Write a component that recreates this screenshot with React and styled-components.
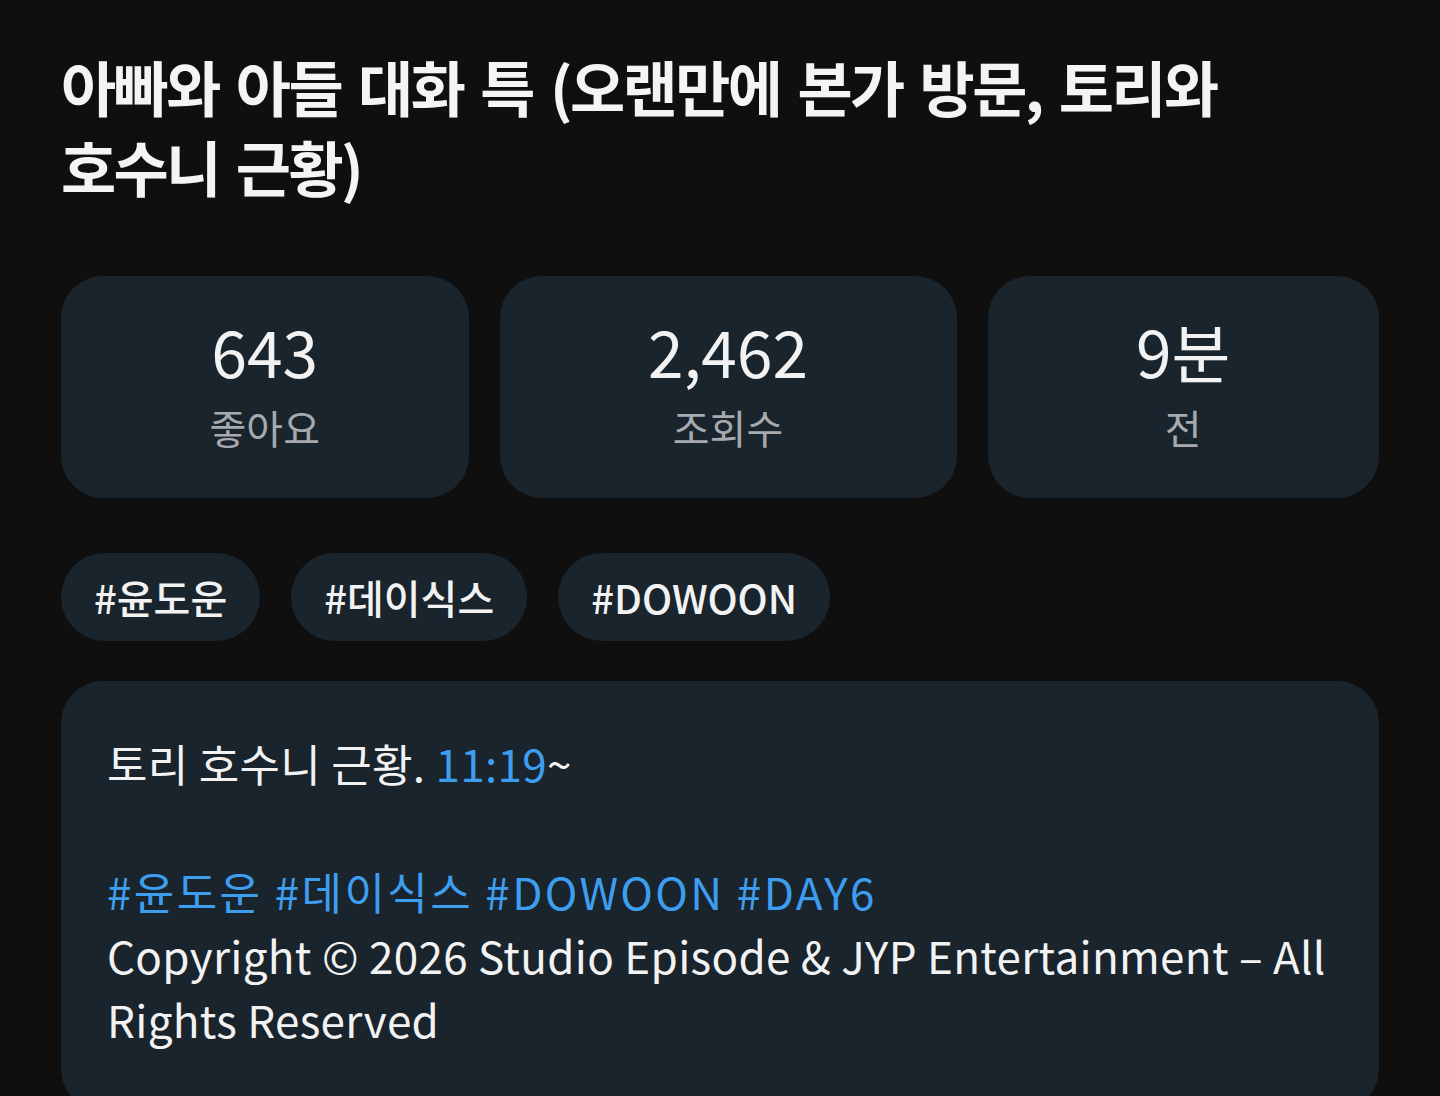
import styled, { createGlobalStyle } from "styled-components";

const GlobalStyle = createGlobalStyle`
  html, body {
    margin: 0;
    padding: 0;
    background: #0f0f0f;
  }
  body {
    font-family: "Noto Sans CJK KR", "Noto Sans", sans-serif;
    color: #f2f2f2;
    font-feature-settings: "palt";
  }
`;

const Page = styled.div`
  display: flex;
  flex-direction: column;
  padding: 46px 61px 0;
  min-height: 1096px;
  box-sizing: border-box;
  overflow: hidden;
`;

const Title = styled.h1`
  margin: 0;
  font-size: 60px;
  line-height: 80px;
  font-weight: 700;
  letter-spacing: -2.6px;
  word-spacing: 6px;
  color: #f4f4f4;
  max-width: 1200px;
`;

const Stats = styled.div`
  display: flex;
  gap: 31px;
  margin-top: 70px;
`;

const StatCard = styled.div`
  flex: 1 1 auto;
  display: flex;
  flex-direction: column;
  align-items: center;
  background: #1a242d;
  border-radius: 42px;
  padding: 38px 24px 47px;
`;

const StatValue = styled.div`
  font-size: 64px;
  line-height: 72px;
  font-weight: 400;
  color: #f2f2f2;
`;

const StatLabel = styled.div`
  margin-top: 17px;
  font-size: 40px;
  line-height: 48px;
  color: #a6a9ad;
`;

const Tags = styled.div`
  display: flex;
  gap: 31px;
  margin-top: 55px;
`;

const Tag = styled.div`
  display: flex;
  align-items: center;
  height: 88px;
  padding: 0 33px;
  background: #1a242d;
  border-radius: 44px;
  font-size: 40px;
  font-weight: 500;
  color: #f2f2f2;
`;

const Description = styled.div`
  margin-top: 40px;
  background: #1a242d;
  border-radius: 42px;
  padding: 50px 46px 60px;
  font-size: 44px;
  line-height: 64px;
  color: #f2f2f2;
  letter-spacing: 0.3px;
`;

const Line = styled.div`
  min-height: 64px;
  letter-spacing: ${(p) => (p.$wide ? "2.4px" : "inherit")};
`;

const Link = styled.span`
  color: #3d9ef0;
`;

const stats = [
  { value: "643", label: "좋아요" },
  { value: "2,462", label: "조회수" },
  { value: "9분", label: "전" },
];

const tags = ["#윤도운", "#데이식스", "#DOWOON"];

export default function App() {
  return (
    <>
      <GlobalStyle />
      <Page>
        <Title>아빠와 아들 대화 특 (오랜만에 본가 방문, 토리와 호수니 근황)</Title>
        <Stats>
          {stats.map((s) => (
            <StatCard key={s.label}>
              <StatValue>{s.value}</StatValue>
              <StatLabel>{s.label}</StatLabel>
            </StatCard>
          ))}
        </Stats>
        <Tags>
          {tags.map((t) => (
            <Tag key={t}>{t}</Tag>
          ))}
        </Tags>
        <Description>
          <Line>
            토리 호수니 근황. <Link>11:19</Link>~
          </Line>
          <Line />
          <Line $wide>
            <Link>#윤도운 #데이식스 #DOWOON #DAY6</Link>
          </Line>
          <Line>
            Copyright © 2026 Studio Episode &amp; JYP Entertainment – All Rights Reserved
          </Line>
        </Description>
      </Page>
    </>
  );
}
